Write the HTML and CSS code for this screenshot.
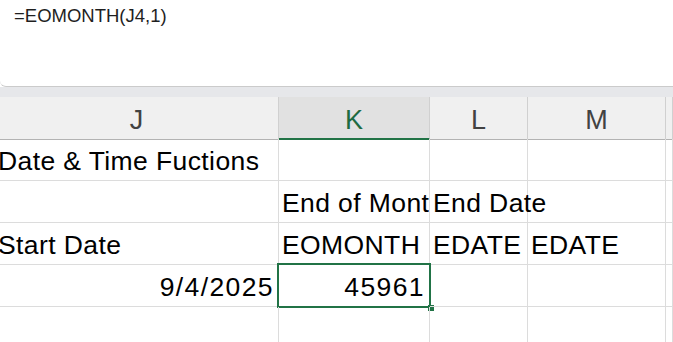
FILE: index.html
```html
<!DOCTYPE html>
<html lang="en">
<head>
  <meta charset="UTF-8" />
  <title>EOMONTH</title>
  <link rel="stylesheet" href="styles.css">
</head>
<body>
  <!-- formula bar -->
  <div class="formula-bar">
    <span class="formula">=EOMONTH(J4,1)</span>
  </div>
  <div class="band"></div>

  <!-- sheet grid: J K L M N -->
  <div class="sheet">
    <div class="col-head">J</div>
    <div class="col-head active">K</div>
    <div class="col-head">L</div>
    <div class="col-head">M</div>
    <div class="col-head"></div>

    <div class="cell">Date &amp; Time Fuctions</div>
    <div class="cell"></div>
    <div class="cell"></div>
    <div class="cell"></div>
    <div class="cell"></div>

    <div class="cell"></div>
    <div class="cell clip">End of Month</div>
    <div class="cell">End Date</div>
    <div class="cell"></div>
    <div class="cell"></div>

    <div class="cell">Start Date</div>
    <div class="cell">EOMONTH</div>
    <div class="cell">EDATE</div>
    <div class="cell">EDATE</div>
    <div class="cell"></div>

    <div class="cell num">9/4/2025</div>
    <div class="cell num selected">45961<span class="selection"><span class="handle"></span></span></div>
    <div class="cell"></div>
    <div class="cell"></div>
    <div class="cell"></div>

    <div class="cell"></div>
    <div class="cell"></div>
    <div class="cell"></div>
    <div class="cell"></div>
    <div class="cell"></div>
  </div>
</body>
</html>
```

FILE: styles.css
```css
body {
  margin: 0;
  padding: 0;
  background: #fff;
  font-family: "Liberation Sans", Arial, sans-serif;
  overflow: hidden;
}

/* formula bar */
.formula-bar {
  height: 87px;
  background: #fff;
  border-bottom: 1px solid #cbcbcb;
  border-bottom-left-radius: 6px;
  box-sizing: border-box;
  padding: 4px 0 0 14px;
}
.formula {
  font-size: 18.5px;
  line-height: 24px;
  color: #1f1f1f;
}
.band {
  height: 10px;
  background: #e6e7ea;
}

/* sheet */
.sheet {
  display: grid;
  grid-template-columns: 284px 151px 98px 138px 1fr;
  grid-auto-rows: 42px;
  margin-left: -5px;
  width: calc(100% + 5px);
}
.col-head {
  height: 43px;
  box-sizing: border-box;
  background: #f0f0f0;
  border-right: 1px solid #d0d0d0;
  border-bottom: 1px solid #b3b3b3;
  display: flex;
  align-items: flex-end;
  justify-content: center;
  padding-bottom: 3px;
  font-size: 27px;
  color: #424242;
}
.col-head.active {
  background: #e1e1e1;
  color: #1e6b41;
  border-bottom: 2px solid #217346;
  padding-bottom: 2px;
}

.cell {
  box-sizing: border-box;
  border-right: 1px solid #dcdcdc;
  border-bottom: 1px solid #dcdcdc;
  display: flex;
  align-items: flex-end;
  padding: 0 3px 3px 3px;
  font-size: 26.5px;
  letter-spacing: 0.4px;
  color: #000;
  white-space: nowrap;
  position: relative;
}
.cell.clip {
  overflow: hidden;
}
.cell.num {
  justify-content: flex-end;
  letter-spacing: 1.4px;
  padding-right: 4px;
}

/* active cell outline */
.selection {
  position: absolute;
  top: -2px;
  left: -2px;
  right: -2px;
  bottom: -2px;
  border: 2px solid #217346;
}
.handle {
  position: absolute;
  right: -5px;
  bottom: -5px;
  width: 6px;
  height: 6px;
  background: #217346;
}
```
